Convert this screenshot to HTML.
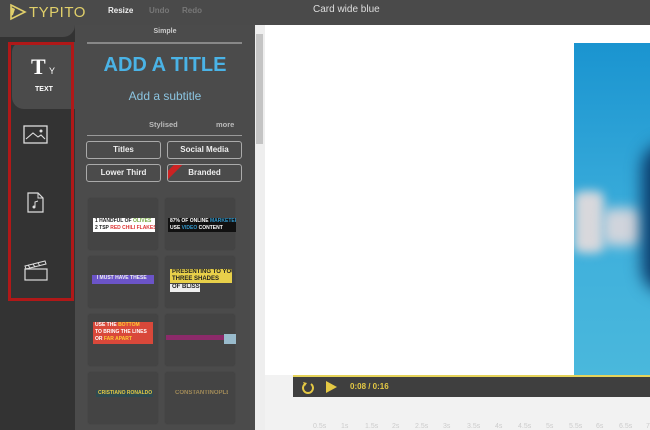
<!DOCTYPE html>
<html><head><style>
*{margin:0;padding:0;box-sizing:border-box}
body{width:650px;height:430px;overflow:hidden;background:#f2f2f2;font-family:"Liberation Sans",sans-serif;position:relative}
.a{position:absolute}
.btn{position:absolute;border:1px solid #aaa;border-radius:3px;color:#eee;font-size:8px;font-weight:bold;text-align:center;line-height:16px;background:#4b4b4b}
.card{position:absolute;width:70px;height:52px;background:#444;border-radius:3px;box-shadow:0 0 1px #3a3a3a}
.card div{font-size:5px;font-weight:bold;line-height:7px;padding-left:2px;white-space:nowrap;overflow:hidden}
.tl{position:absolute;top:423px;font-size:7px;color:#ccc}
</style></head><body>
<div class="a" style="left:0;top:0;width:650px;height:25px;background:#4a4a4a"></div>
<svg class="a" style="left:8px;top:3px" width="20" height="18" viewBox="0 0 20 18"><path d="M3 2 L17 9 L3 16 Z" fill="none" stroke="#e0cf6a" stroke-width="1.6"/><path d="M3 4 L7 6 L5 12 L3 13Z" fill="#e0cf6a"/></svg>
<div class="a" style="left:29px;top:4px;font-size:15px;color:#e0cf6a;letter-spacing:0.5px">TYPITO</div>
<div class="a" style="left:108px;top:6px;font-size:8px;font-weight:bold;color:#eee">Resize</div>
<div class="a" style="left:149px;top:6px;font-size:8px;font-weight:bold;color:#777">Undo</div>
<div class="a" style="left:182px;top:6px;font-size:8px;font-weight:bold;color:#777">Redo</div>
<div class="a" style="left:313px;top:4px;font-size:10px;color:#ddd">Card wide blue</div>
<div class="a" style="left:0;top:25px;width:75px;height:405px;background:#333"></div>
<div class="a" style="left:0;top:25px;width:75px;height:12px;background:#4a4a4a;border-bottom-right-radius:12px"></div>
<div class="a" style="left:12px;top:42px;width:63px;height:67px;background:#4b4b4b;border-radius:10px 0 0 12px"></div>
<div class="a" style="left:8px;top:42px;width:66px;height:259px;border:3px solid #b01818"></div>
<div class="a" style="left:31px;top:54px;font-family:'Liberation Serif',serif;font-weight:bold;font-size:22px;color:#fff">T</div>
<div class="a" style="left:49px;top:66px;font-size:9px;color:#fff">Y</div>
<div class="a" style="left:35px;top:86px;font-size:7px;font-weight:bold;color:#fff">TEXT</div>
<svg class="a" style="left:23px;top:125px" width="26" height="20"><rect x="1" y="1" width="23" height="17" fill="none" stroke="#ddd" stroke-width="1.3"/><path d="M3 14 L10 8 L15 12 L18 10 L22 14" fill="none" stroke="#ddd" stroke-width="1.1"/><circle cx="18" cy="6" r="1.5" fill="#ddd"/></svg>
<svg class="a" style="left:26px;top:192px" width="20" height="22"><path d="M2 1 H12 L17 6 V20 H2 Z" fill="none" stroke="#ddd" stroke-width="1.2"/><path d="M12 1 V6 H17" fill="none" stroke="#ddd"/><path d="M9 15 V10 L12 9" stroke="#ddd" fill="none"/><circle cx="8" cy="15" r="1.5" fill="#ddd"/></svg>
<svg class="a" style="left:23px;top:259px" width="26" height="22"><path d="M2 7 L22 2 L23 5 L3 10Z" fill="none" stroke="#ddd"/><rect x="2" y="10" width="22" height="11" fill="none" stroke="#ddd" stroke-width="1.2"/><path d="M5 6 l2 3 M10 5 l2 3 M15 4 l2 3" stroke="#ddd"/></svg>
<div class="a" style="left:75px;top:25px;width:180px;height:405px;background:#4b4b4b"></div>
<div class="a" style="left:75px;top:28px;width:180px;text-align:center;font-size:7px;font-weight:bold;color:#ccc">Simple</div>
<div class="a" style="left:87px;top:42px;width:155px;height:2px;background:#888"></div>
<div class="a" style="left:75px;top:54px;width:180px;text-align:center;font-size:20px;font-weight:bold;color:#4ab3e6">ADD A TITLE</div>
<div class="a" style="left:75px;top:89px;width:180px;text-align:center;font-size:12px;color:#8bc4e0">Add a subtitle</div>
<div class="a" style="left:149px;top:120px;font-size:7.5px;font-weight:bold;color:#bbb">Stylised</div>
<div class="a" style="left:216px;top:120px;font-size:7.5px;font-weight:bold;color:#bbb">more</div>
<div class="a" style="left:87px;top:135px;width:155px;height:1px;background:#999"></div>
<div class="btn" style="left:86px;top:141px;width:75px;height:18px">Titles</div>
<div class="btn" style="left:167px;top:141px;width:75px;height:18px">Social Media</div>
<div class="btn" style="left:86px;top:164px;width:75px;height:18px">Lower Third</div>
<div class="btn" style="left:167px;top:164px;width:75px;height:18px;overflow:hidden">Branded<div class="a" style="left:-6px;top:2px;width:22px;height:6px;background:#c22;transform:rotate(-45deg)"></div></div>
<div class="card" style="left:88px;top:198px"><div class="a" style="left:5px;top:20px;width:62px;height:14px;background:#fff;color:#222">1 HANDFUL OF <span style="color:#7a4">OLIVES</span><br>2 TSP <span style="color:#d33">RED CHILI FLAKES</span></div></div>
<div class="card" style="left:165px;top:198px"><div class="a" style="left:3px;top:20px;width:68px;height:14px;background:#111;color:#fff">87% OF ONLINE <span style="color:#39c">MARKETERS</span><br>USE <span style="color:#39c">VIDEO</span> CONTENT</div></div>
<div class="card" style="left:88px;top:256px"><div class="a" style="left:4px;top:19px;width:62px;height:9px;background:#6b54c8;color:#eee">&nbsp; I MUST HAVE THESE</div></div>
<div class="card" style="left:165px;top:256px"><div class="a" style="left:5px;top:13px;width:62px;height:14px;background:#e8d04a;color:#222;font-size:6px">PRESENTING TO YOU<br>THREE SHADES</div><div class="a" style="left:5px;top:28px;width:30px;height:8px;background:#eee;color:#222;font-size:6px">OF BLISS</div></div>
<div class="card" style="left:88px;top:314px"><div class="a" style="left:5px;top:8px;width:60px;height:22px;background:#d9483a;color:#fff">USE THE <span style="color:#fc3">BOTTOM</span><br>TO BRING THE LINES<br>OR <span style="color:#fc3">FAR APART</span></div></div>
<div class="card" style="left:165px;top:314px"><div class="a" style="left:1px;top:21px;width:60px;height:5px;background:#8c2a6a"></div><div class="a" style="left:59px;top:20px;width:12px;height:10px;background:#9bc"></div></div>
<div class="card" style="left:88px;top:372px"><div class="a" style="left:8px;top:18px;width:57px;height:7px;background:#2e4a50;color:#e5c944">CRISTIANO RONALDO</div></div>
<div class="card" style="left:165px;top:372px"><div class="a" style="left:8px;top:18px;width:55px;height:8px;color:#a08a58;font-size:6px;text-align:center">CONSTANTINOPLE</div></div>
<div class="a" style="left:255px;top:25px;width:10px;height:405px;background:#eee"></div>
<div class="a" style="left:256px;top:34px;width:7px;height:110px;background:#c4c4c4"></div>
<div class="a" style="left:265px;top:25px;width:385px;height:350px;background:#fff"></div>
<div class="a" style="left:574px;top:43px;width:76px;height:333px;background:linear-gradient(#1a94d0,#3fb0dc 60%,#4ab8dc);overflow:hidden">
<div class="a" style="left:0;top:148px;width:30px;height:62px;background:#d8d8dc;filter:blur(5px);border-radius:8px"></div>
<div class="a" style="left:28px;top:165px;width:40px;height:38px;background:#d0d4dc;filter:blur(6px);border-radius:10px"></div>
<div class="a" style="left:68px;top:100px;width:50px;height:150px;background:#0a3a6a;filter:blur(8px);border-radius:30px"></div>
</div>
<div class="a" style="left:293px;top:375px;width:357px;height:22px;background:#3f3f3f;border-top:2px solid #e5d35a"></div>
<svg class="a" style="left:301px;top:381px" width="14" height="13"><path d="M4 3 A5 5 0 1 0 10 3" fill="none" stroke="#e5c944" stroke-width="2"/><path d="M2 1 L6 2 L4 5Z" fill="#e5c944"/></svg>
<div class="a" style="left:326px;top:381px;width:0;height:0;border-left:11px solid #e5c944;border-top:6px solid transparent;border-bottom:6px solid transparent"></div>
<div class="a" style="left:350px;top:382px;font-size:8px;font-weight:bold;color:#e5c944">0:08 / 0:16</div>
<div class="tl" style="left:313px">0.5s</div><div class="tl" style="left:341px">1s</div><div class="tl" style="left:365px">1.5s</div><div class="tl" style="left:392px">2s</div><div class="tl" style="left:415px">2.5s</div><div class="tl" style="left:443px">3s</div><div class="tl" style="left:467px">3.5s</div><div class="tl" style="left:495px">4s</div><div class="tl" style="left:518px">4.5s</div><div class="tl" style="left:546px">5s</div><div class="tl" style="left:569px">5.5s</div><div class="tl" style="left:596px">6s</div><div class="tl" style="left:619px">6.5s</div><div class="tl" style="left:646px">7</div>
</body></html>
